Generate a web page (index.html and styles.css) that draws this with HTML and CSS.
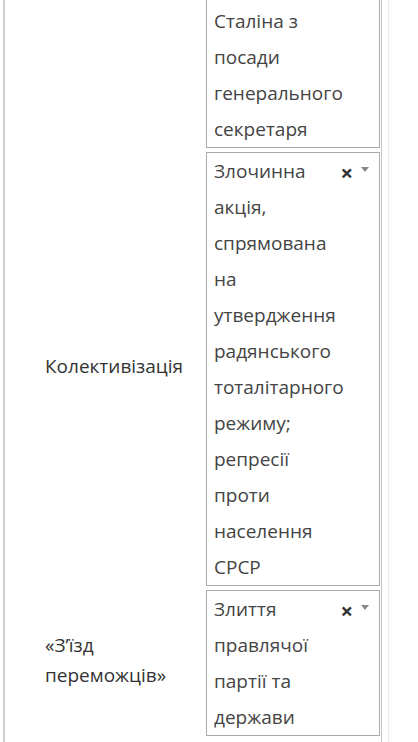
FILE: index.html
```html
<!DOCTYPE html>
<html lang="uk">
<head>
    <meta charset="UTF-8">
    <meta name="viewport" content="width=device-width, initial-scale=1.0">
    <title>Відповідність подій</title>
    <link rel="stylesheet" href="styles.css">
</head>
<body>
    <div class="sheet">
        <div class="match-table">
            <!-- Row: Великий терор -->
            <div class="match-row">
                <div class="match-label">Великий терор</div>
                <div class="match-value">
                    <div class="pick">
                        <span class="pick-text">Спроба змінити політичний курс через усунення Сталіна з посади генерального секретаря</span>
                        <span class="pick-clear">×</span>
                        <span class="pick-arrow"></span>
                    </div>
                </div>
            </div>

            <!-- Row: Колективізація -->
            <div class="match-row">
                <div class="match-label">Колективізація</div>
                <div class="match-value">
                    <div class="pick">
                        <span class="pick-text">Злочинна акція, спрямована на утвердження радянського тоталітарного режиму; репресії проти населення СРСР</span>
                        <span class="pick-clear">×</span>
                        <span class="pick-arrow"></span>
                    </div>
                </div>
            </div>

            <!-- Row: З'їзд переможців -->
            <div class="match-row">
                <div class="match-label">«З’їзд переможців»</div>
                <div class="match-value">
                    <div class="pick">
                        <span class="pick-text">Злиття правлячої партії та держави</span>
                        <span class="pick-clear">×</span>
                        <span class="pick-arrow"></span>
                    </div>
                </div>
            </div>
        </div>
    </div>
</body>
</html>
```

FILE: styles.css
```css
body {
    margin: 0;
    background: #fff;
    color: #333;
    font-family: 'Open Sans', 'Noto Sans', sans-serif;
    font-size: 19px;
}

/* page is shown scrolled: the first row starts above the window */
.sheet {
    margin-top: -180px;
    margin-left: 3px;
    width: 379px;
    padding-right: 6px;
    border-right: 1px solid #ececec;
}

.match-table {
    border-left: 2px solid #cfcfcf;
    border-right: 1px solid #c4c4c4;
    padding-bottom: 12px;
}

.match-row {
    display: grid;
    grid-template-columns: 201px 175px;
    align-items: center;
    padding: 2px 0;
}

.match-label {
    padding: 0 10px 6px 40px;
    line-height: 30px;
    color: #333;
}

.match-value {
    padding-right: 1px;
}

/* select2-like single select */
.pick {
    position: relative;
    border: 1px solid #aaa;
    background: #fff;
}

.pick-text {
    display: block;
    padding: 0 39px 0 7px;
    line-height: 36px;
    color: #444;
}

.pick-clear {
    position: absolute;
    top: 0;
    right: 26px;
    line-height: 39px;
    font-weight: bold;
    font-size: 22px;
    color: #333;
}

.pick-arrow {
    position: absolute;
    top: 14px;
    right: 10px;
    width: 0;
    height: 0;
    border-left: 4px solid transparent;
    border-right: 4px solid transparent;
    border-top: 5px solid #888;
}
```
